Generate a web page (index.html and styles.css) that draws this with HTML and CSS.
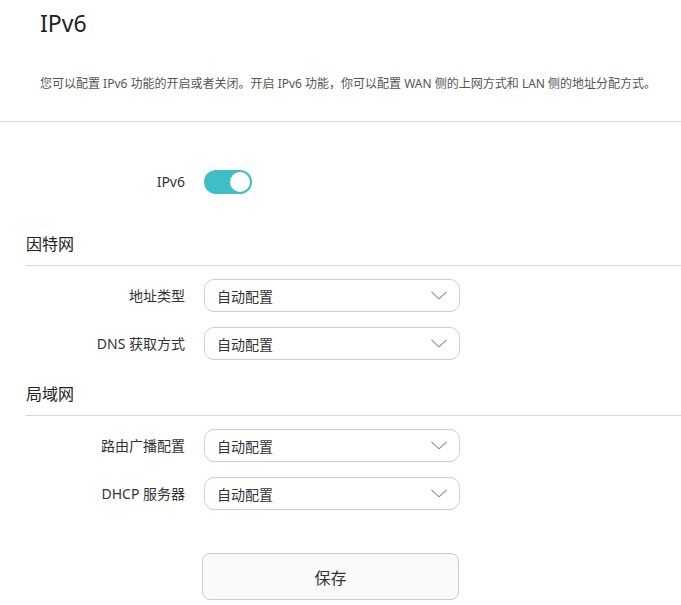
FILE: index.html
```html
<!DOCTYPE html>
<html lang="zh-CN">
<head>
<meta charset="utf-8">
<title>IPv6</title>
<link rel="stylesheet" href="styles.css">
</head>
<body>
<div class="page">
  <header class="intro">
    <h1 class="title">IPv6</h1>
    <p class="desc">您可以配置 IPv6 功能的开启或者关闭。开启 IPv6 功能，你可以配置 WAN 侧的上网方式和 LAN 侧的地址分配方式。</p>
  </header>
  <div class="divider"></div>

  <div class="row row-toggle">
    <span class="label">IPv6</span>
    <span class="toggle on"><span class="knob"></span></span>
  </div>

  <section class="group">
    <h2 class="group-title">因特网</h2>
    <div class="rows">
      <div class="row">
        <span class="label">地址类型</span>
        <div class="select"><span>自动配置</span>
          <svg class="chev" width="16" height="9" viewBox="0 0 16 9"><path d="M0.5 0.8 L8 7.8 L15.5 0.8" fill="none" stroke="#8a8a8a" stroke-width="1.1"/></svg>
        </div>
      </div>
      <div class="row">
        <span class="label">DNS 获取方式</span>
        <div class="select"><span>自动配置</span>
          <svg class="chev" width="16" height="9" viewBox="0 0 16 9"><path d="M0.5 0.8 L8 7.8 L15.5 0.8" fill="none" stroke="#8a8a8a" stroke-width="1.1"/></svg>
        </div>
      </div>
    </div>
  </section>

  <section class="group group-lan">
    <h2 class="group-title">局域网</h2>
    <div class="rows">
      <div class="row">
        <span class="label">路由广播配置</span>
        <div class="select"><span>自动配置</span>
          <svg class="chev" width="16" height="9" viewBox="0 0 16 9"><path d="M0.5 0.8 L8 7.8 L15.5 0.8" fill="none" stroke="#8a8a8a" stroke-width="1.1"/></svg>
        </div>
      </div>
      <div class="row">
        <span class="label">DHCP 服务器</span>
        <div class="select"><span>自动配置</span>
          <svg class="chev" width="16" height="9" viewBox="0 0 16 9"><path d="M0.5 0.8 L8 7.8 L15.5 0.8" fill="none" stroke="#8a8a8a" stroke-width="1.1"/></svg>
        </div>
      </div>
    </div>
  </section>

  <div class="actions">
    <button class="save" type="button">保存</button>
  </div>
</div>
</body>
</html>
```

FILE: styles.css
```css
* { box-sizing: border-box; }

html, body {
  margin: 0;
  padding: 0;
  background: #ffffff;
}

body {
  font-family: "Noto Sans", "Noto Sans CJK SC", sans-serif;
  color: #333333;
  overflow: hidden;
}

.page {
  width: 681px;
}

.intro {
  padding-left: 40px;
}

.title {
  margin: 8px 0 0 0;
  font-size: 23px;
  line-height: 31px;
  font-weight: 400;
  color: #222222;
}

.desc {
  margin: 36px 0 0 0;
  font-size: 12px;
  line-height: 18px;
  color: #555555;
  white-space: nowrap;
}

.divider {
  margin-top: 28px;
  height: 1px;
  background: #d6d6d6;
}

.row {
  display: grid;
  grid-template-columns: 185px 256px;
  column-gap: 19px;
  align-items: center;
}

.row-toggle {
  margin-top: 48px;
}

.label {
  text-align: right;
  font-size: 14px;
  line-height: 20px;
  color: #333333;
  white-space: nowrap;
}

.toggle {
  display: flex;
  align-items: center;
  justify-content: flex-end;
  width: 48px;
  height: 24px;
  padding: 2px;
  border-radius: 12px;
  background: #3fbfc5;
}

.knob {
  width: 20px;
  height: 20px;
  border-radius: 50%;
  background: #ffffff;
}

.group {
  margin-top: 38px;
}

.group-lan {
  margin-top: 22px;
}

.group-title {
  margin: 0 0 0 26px;
  padding-bottom: 9px;
  border-bottom: 1px solid #d6d6d6;
  font-size: 16px;
  line-height: 24px;
  font-weight: 400;
  color: #222222;
}

.rows {
  display: flex;
  flex-direction: column;
  gap: 15px;
  padding-top: 13px;
}

.select {
  display: flex;
  align-items: center;
  justify-content: space-between;
  height: 33px;
  padding: 0 12px 0 12px;
  border: 1px solid #cfcfcf;
  border-radius: 10px;
  font-size: 14px;
  color: #333333;
  background: #ffffff;
}

.chev {
  display: block;
}

.actions {
  padding-left: 202px;
  margin-top: 43px;
}

.save {
  display: block;
  width: 257px;
  height: 47px;
  border: 1px solid #cccccc;
  border-radius: 8px;
  background: #fafafa;
  font-family: "Noto Sans", "Noto Sans CJK SC", sans-serif;
  font-size: 16px;
  color: #333333;
  padding: 0;
}
```
